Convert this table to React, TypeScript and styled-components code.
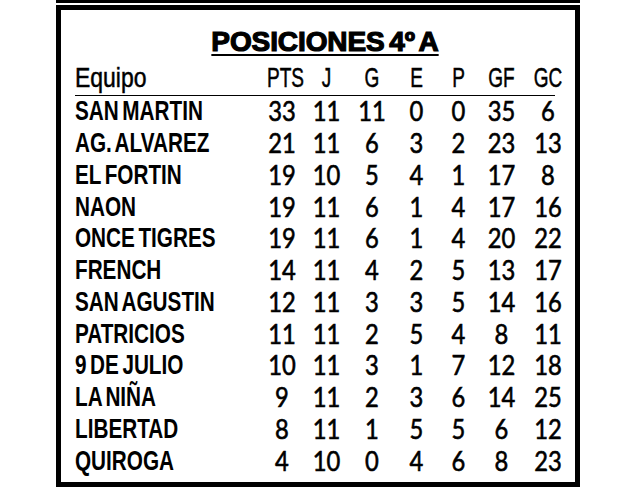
import React from 'react';
import styled, { createGlobalStyle } from 'styled-components';

type Team = {
  name: string;
  pts: number;
  j: number;
  g: number;
  e: number;
  p: number;
  gf: number;
  gc: number;
};

const teams: Team[] = [
  { name: 'SAN MARTIN', pts: 33, j: 11, g: 11, e: 0, p: 0, gf: 35, gc: 6 },
  { name: 'AG. ALVAREZ', pts: 21, j: 11, g: 6, e: 3, p: 2, gf: 23, gc: 13 },
  { name: 'EL FORTIN', pts: 19, j: 10, g: 5, e: 4, p: 1, gf: 17, gc: 8 },
  { name: 'NAON', pts: 19, j: 11, g: 6, e: 1, p: 4, gf: 17, gc: 16 },
  { name: 'ONCE TIGRES', pts: 19, j: 11, g: 6, e: 1, p: 4, gf: 20, gc: 22 },
  { name: 'FRENCH', pts: 14, j: 11, g: 4, e: 2, p: 5, gf: 13, gc: 17 },
  { name: 'SAN AGUSTIN', pts: 12, j: 11, g: 3, e: 3, p: 5, gf: 14, gc: 16 },
  { name: 'PATRICIOS', pts: 11, j: 11, g: 2, e: 5, p: 4, gf: 8, gc: 11 },
  { name: '9 DE JULIO', pts: 10, j: 11, g: 3, e: 1, p: 7, gf: 12, gc: 18 },
  { name: 'LA NIÑA', pts: 9, j: 11, g: 2, e: 3, p: 6, gf: 14, gc: 25 },
  { name: 'LIBERTAD', pts: 8, j: 11, g: 1, e: 5, p: 5, gf: 6, gc: 12 },
  { name: 'QUIROGA', pts: 4, j: 10, g: 0, e: 4, p: 6, gf: 8, gc: 23 },
];

const columns = ['PTS', 'J', 'G', 'E', 'P', 'GF', 'GC'];

const sans = `'Liberation Sans', Arial, sans-serif`;
const digits = `Lato, 'Liberation Sans', sans-serif`;

const GlobalStyle = createGlobalStyle`
  html, body {
    margin: 0;
    padding: 0;
    background: #fff;
  }
`;

const App: React.FC = () => {
  return (
    <>
      <GlobalStyle />
      <Page>
        <TopRule />
        <Frame>
          <TitleWrap>
            <Title>POSICIONES 4º A</Title>
          </TitleWrap>
          <HeaderRow>
            <HeaderCell $align="left" $squeeze={0.82}>
              Equipo
            </HeaderCell>
            {columns.map((c) => (
              <HeaderCell key={c} $align="center" $squeeze={0.68}>
                {c}
              </HeaderCell>
            ))}
          </HeaderRow>
          {teams.map((t) => (
            <Row key={t.name}>
              <TeamCell>{t.name}</TeamCell>
              <NumCell>{t.pts}</NumCell>
              <NumCell>{t.j}</NumCell>
              <NumCell>{t.g}</NumCell>
              <NumCell>{t.e}</NumCell>
              <NumCell>{t.p}</NumCell>
              <NumCell>{t.gf}</NumCell>
              <NumCell>{t.gc}</NumCell>
            </Row>
          ))}
        </Frame>
      </Page>
    </>
  );
};

const Page = styled.div`
  width: 524px;
  margin-left: 56px;
  background: #fff;
`;

const TopRule = styled.div`
  height: 3px;
  background: #000;
  margin-bottom: 2px;
`;

const Frame = styled.div`
  box-sizing: border-box;
  height: 482px;
  border: 5px solid #000;
  padding: 16px 0 0 14px;
  color: #000;
`;

const TitleWrap = styled.div`
  display: flex;
  justify-content: center;
  height: 31px;
`;

const Title = styled.h1`
  margin: 0;
  font-family: ${sans};
  font-weight: 700;
  font-size: 28px;
  line-height: 31px;
  letter-spacing: -0.1px;
  word-spacing: -3px;
  -webkit-text-stroke: 1.2px #000;
  text-decoration: underline;
  text-decoration-thickness: 2px;
  text-underline-offset: 3px;
`;

const gridCols = '185px 44px 45px 46px 43px 41px 45px 48px';

const Row = styled.div`
  box-sizing: border-box;
  display: grid;
  grid-template-columns: ${gridCols};
  height: 31.75px;
  padding-bottom: 1px;
  align-items: center;
`;

const HeaderRow = styled(Row)`
  width: 480px;
  height: 39px;
  padding: 3px 0 0;
  border-bottom: 1.5px solid #000;
`;

const HeaderCell = styled.div<{ $align: 'left' | 'center'; $squeeze: number }>`
  font-family: ${sans};
  font-weight: 400;
  font-size: 28px;
  line-height: 30px;
  text-align: ${(p) => p.$align};
  white-space: nowrap;
  -webkit-text-stroke: 0.5px #000;
  transform: scaleX(${(p) => p.$squeeze});
  transform-origin: ${(p) => (p.$align === 'left' ? 'left' : 'center')} center;
`;

const TeamCell = styled.div`
  font-family: ${sans};
  font-weight: 700;
  font-size: 28px;
  line-height: 28px;
  word-spacing: -3px;
  white-space: nowrap;
  transform: scaleX(0.74);
  transform-origin: left center;
`;

const NumCell = styled.div`
  font-family: ${digits};
  font-weight: 400;
  font-size: 27px;
  line-height: 28px;
  text-align: center;
  -webkit-text-stroke: 0.6px #000;
  transform: scaleX(0.88);
`;

export default App;
